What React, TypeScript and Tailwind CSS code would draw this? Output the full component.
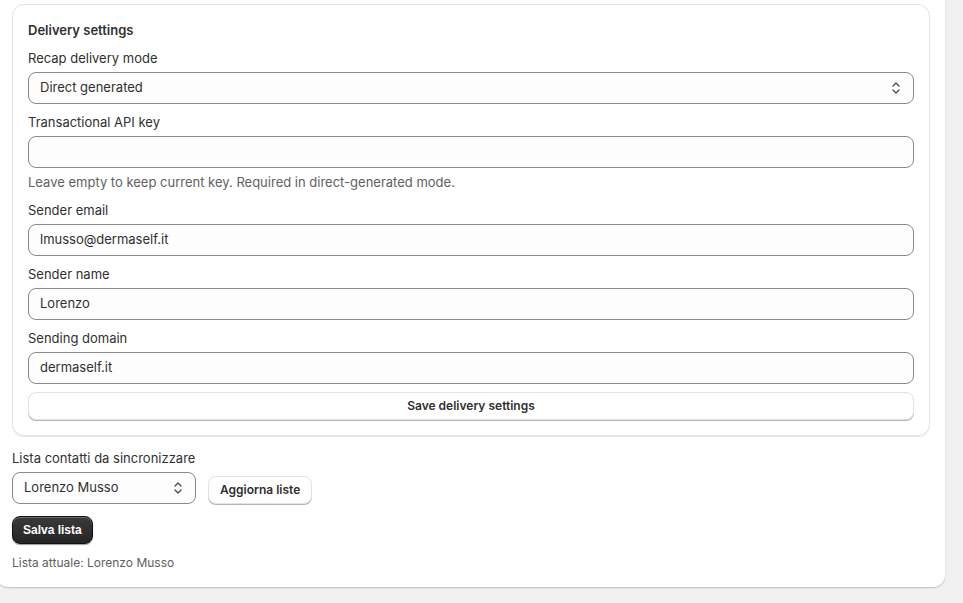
const font = { fontFamily: "Inter, 'Noto Sans', sans-serif" };

function SelectIcon() {
  return (
    <svg viewBox="0 0 20 20" className="w-[20px] h-[20px] text-[#4a4a4a]" fill="none" stroke="currentColor" strokeWidth="1.3" strokeLinecap="round" strokeLinejoin="round">
      <path d="M7 8 10 5 13 8" />
      <path d="M7 12 10 15 13 12" />
    </svg>
  );
}

function Field({ label, value, help }: { label: string; value?: string; help?: string }) {
  return (
    <div className="flex flex-col gap-[4px]">
      <label className="text-[13px] leading-[20px] text-[#303030]">{label}</label>
      <div className="h-[32px] rounded-[8px] border border-[#8a8a8a] bg-[#fdfdfd] px-[11px] flex items-center text-[13px] text-[#303030]">
        {value}
      </div>
      {help && <p className="text-[13px] leading-[20px] text-[#616161]">{help}</p>}
    </div>
  );
}

export default function App() {
  return (
    <div className="min-h-screen bg-[#f1f1f1] overflow-hidden" style={font}>
      <div className="-ml-[4px] -mt-[12px] w-[949px] bg-white rounded-[12px] shadow-[0_1px_0_0_rgba(26,26,26,0.07),0_1px_2px_rgba(0,0,0,0.15)] pl-[16px] pr-[15px] pt-[16px] pb-[16px]">
        <div className="rounded-[12px] border border-[#e3e3e3] shadow-[0_1px_0_rgba(0,0,0,0.1)] px-[15px] pt-[15px] pb-[15px] flex flex-col gap-[8px]">
          <h2 className="text-[13px] font-semibold leading-[20px] text-[#303030]">Delivery settings</h2>

          <div className="flex flex-col gap-[4px]">
            <label className="text-[13px] leading-[20px] text-[#303030]">Recap delivery mode</label>
            <div className="h-[32px] rounded-[8px] border border-[#8a8a8a] bg-[#fdfdfd] pl-[11px] pr-[7px] flex items-center justify-between text-[13px] text-[#303030]">
              <span>Direct generated</span>
              <SelectIcon />
            </div>
          </div>

          <Field
            label="Transactional API key"
            help="Leave empty to keep current key. Required in direct-generated mode."
          />
          <Field label="Sender email" value="lmusso@dermaself.it" />
          <Field label="Sender name" value="Lorenzo" />
          <Field label="Sending domain" value="dermaself.it" />

          <button className="h-[28px] rounded-[8px] bg-white border border-[#e3e3e3] shadow-[0_1px_0_#b5b5b5] text-[12px] font-semibold text-[#303030]">
            Save delivery settings
          </button>
        </div>

        <div className="mt-[12px] flex flex-col">
          <label className="text-[13px] leading-[20px] text-[#303030]">Lista contatti da sincronizzare</label>
          <div className="mt-[4px] flex items-end gap-[12px]">
            <div className="w-[184px] h-[32px] rounded-[8px] border border-[#8a8a8a] bg-[#fdfdfd] pl-[11px] pr-[7px] flex items-center justify-between text-[13px] text-[#303030]">
              <span>Lorenzo Musso</span>
              <SelectIcon />
            </div>
            <button className="h-[28px] px-[11px] rounded-[8px] bg-white border border-[#e3e3e3] shadow-[0_1px_0_#b5b5b5] text-[12px] font-semibold text-[#303030]">
              Aggiorna liste
            </button>
          </div>
          <div className="mt-[12px]">
            <button
              className="h-[28px] px-[10px] rounded-[8px] bg-gradient-to-b from-[#3a3a3a] to-[#252525] border border-[#111] shadow-[inset_0_1px_0_rgba(255,255,255,0.25),0_1px_1px_rgba(0,0,0,0.4)] text-[12px] font-bold text-white"
              style={{ fontFamily: "'Liberation Sans', Arial, sans-serif" }}
            >
              Salva lista
            </button>
          </div>
          <p className="mt-[11px] text-[12px] leading-[16px] text-[#616161]">Lista attuale: Lorenzo Musso</p>
        </div>
      </div>
    </div>
  );
}
